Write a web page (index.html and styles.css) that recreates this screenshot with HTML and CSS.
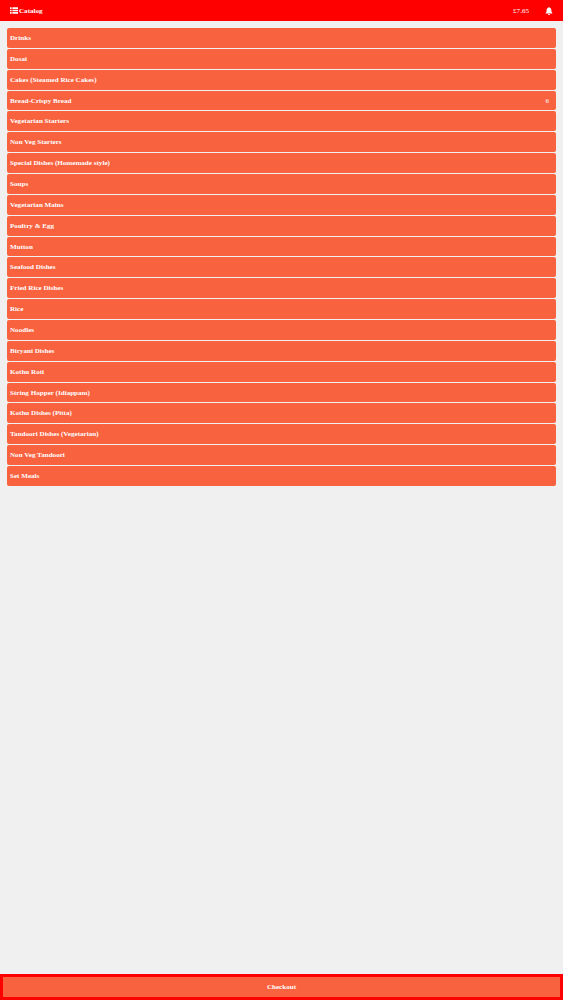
FILE: index.html
```html
<!DOCTYPE html>
<html lang="en">
<head>
<meta charset="utf-8">
<title>Catalog</title>
<link rel="stylesheet" href="styles.css">
</head>
<body>
<div class="app">
  <header class="topbar">
    <div class="brand">
      <svg class="menu-icon" viewBox="0 0 10 8" aria-hidden="true"><path d="M0 0h2v2H0zM3 0h7v2H3zM0 3h2v2H0zM3 3h7v2H3zM0 6h2v2H0zM3 6h7v2H3z"/></svg>
      <span>Catalog</span>
    </div>
    <div class="top-right">
      <span class="total">£7.65</span>
      <svg class="bell" viewBox="0 0 10 10" aria-hidden="true"><path d="M5 0c.5 0 .8.3.8.8 1.5.4 2.2 1.600 2.200 3.200 0 1.800.4 2.600 1.200 3.400v.6H.8v-.6C1.600 6.600 2 5.800 2 4c0-1.600.7-2.800 2.200-3.200C4.200.3 4.500 0 5 0zM3.800 8.600h2.400C6.200 9.400 5.600 10 5 10s-1.200-.6-1.200-1.400z"/></svg>
    </div>
  </header>
  <main class="list">
    <div class="row"><span>Drinks</span></div>
    <div class="row"><span>Dosai</span></div>
    <div class="row"><span>Cakes (Steamed Rice Cakes)</span></div>
    <div class="row"><span>Bread-Crispy Bread</span><span class="count">6</span></div>
    <div class="row"><span>Vegetarian Starters</span></div>
    <div class="row"><span>Non Veg Starters</span></div>
    <div class="row"><span>Special Dishes (Homemade style)</span></div>
    <div class="row"><span>Soups</span></div>
    <div class="row"><span>Vegetarian Mains</span></div>
    <div class="row"><span>Poultry &amp; Egg</span></div>
    <div class="row"><span>Mutton</span></div>
    <div class="row"><span>Seafood Dishes</span></div>
    <div class="row"><span>Fried Rice Dishes</span></div>
    <div class="row"><span>Rice</span></div>
    <div class="row"><span>Noodles</span></div>
    <div class="row"><span>Biryani Dishes</span></div>
    <div class="row"><span>Kothu Roti</span></div>
    <div class="row"><span>String Hopper (Idiappam)</span></div>
    <div class="row"><span>Kothu Dishes (Pitta)</span></div>
    <div class="row"><span>Tandoori Dishes (Vegetarian)</span></div>
    <div class="row"><span>Non Veg Tandoori</span></div>
    <div class="row"><span>Set Meals</span></div>
  </main>
  <footer class="checkout">Checkout</footer>
</div>
</body>
</html>
```
FILE: styles.css
```css
html, body {
  margin: 0;
  padding: 0;
  height: 100%;
}
body {
  background: #f0f0f0;
  font-family: "Liberation Serif", "Times New Roman", serif;
  font-weight: 700;
  font-size: 7.1px;
  color: #fff;
}
.app {
  height: 1000px;
  display: flex;
  flex-direction: column;
}
.topbar {
  height: 21px;
  background: #ff0000;
  display: flex;
  align-items: center;
  justify-content: space-between;
  padding: 0 10px;
  flex: none;
  box-sizing: border-box;
}
.brand {
  display: flex;
  align-items: center;
  gap: 1px;
}
.menu-icon {
  width: 8px;
  height: 7px;
  fill: #fff;
}
.top-right {
  display: flex;
  align-items: center;
  gap: 16px;
}
.total {
  font-weight: 400;
}
.bell {
  width: 8px;
  height: 8px;
  fill: #fff;
}
.list {
  flex: 1;
  padding: 7px 7px 0;
  display: flex;
  flex-direction: column;
  gap: 1px;
}
.row {
  height: 19.86px;
  background: #f9623f;
  border-radius: 2px;
  display: flex;
  align-items: center;
  justify-content: space-between;
  padding: 0 7px 0 3px;
  box-sizing: border-box;
  flex: none;
}
.count {
  font-weight: 400;
}
.checkout {
  flex: none;
  height: 26px;
  box-sizing: border-box;
  background: #f9623f;
  border: 3px solid #ff0000;
  display: flex;
  align-items: center;
  justify-content: center;
}
```
